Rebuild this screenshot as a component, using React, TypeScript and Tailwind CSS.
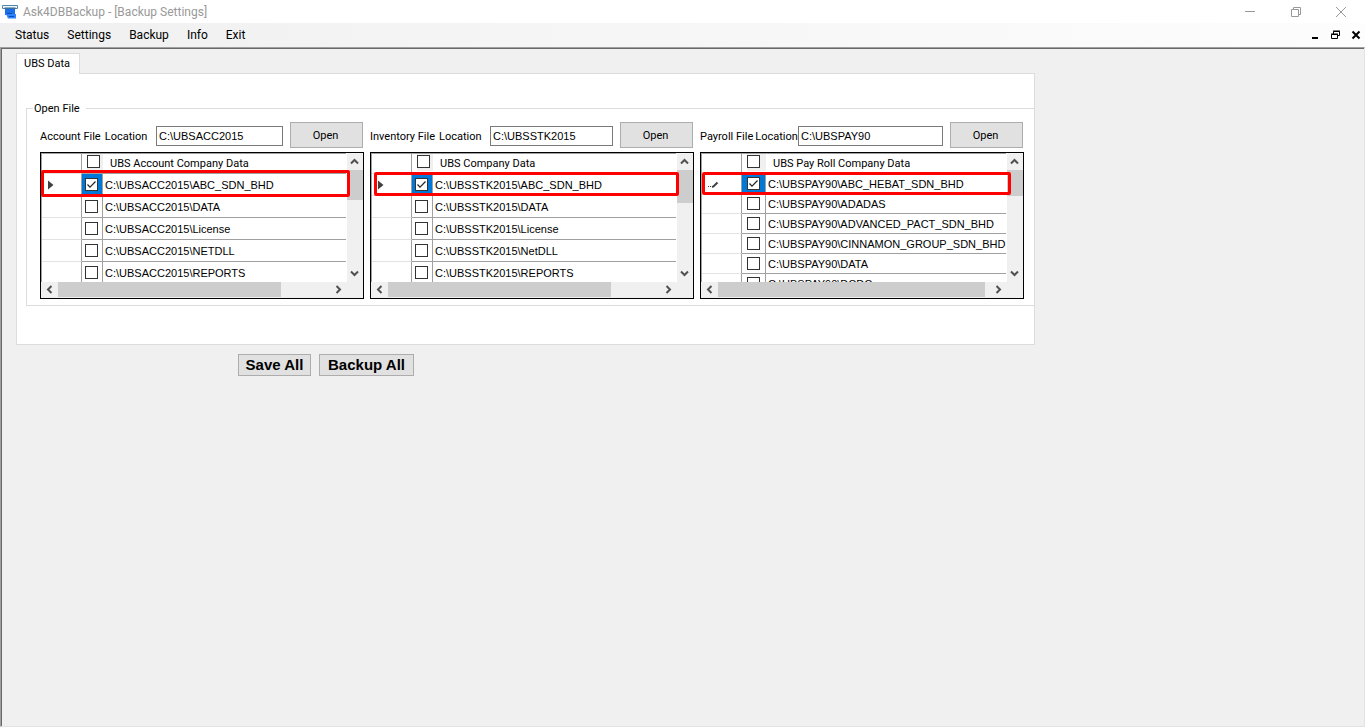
import React, { useState } from "react";

interface Company {
  name: string;
  checked: boolean;
}

interface PanelData {
  id: string;
  label: string;
  labelClass: string;
  path: string;
  heading: string;
  checkColClass: string;
  rowClass: string;
  marker: "arrow" | "pencil";
  highlightClass: string;
  vThumbClass: string;
  hThumbClass: string;
  companies: string[];
}

const panels: PanelData[] = [
  {
    id: "account",
    label: "Account File",
    labelClass: "w-[116px] gap-1",
    path: "C:\\UBSACC2015",
    heading: "UBS Account Company Data",
    checkColClass: "w-[21px]",
    rowClass: "h-[22px]",
    marker: "arrow",
    highlightClass: "left-0 right-[13px] top-[17px] h-[27px]",
    vThumbClass: "h-[30px]",
    hThumbClass: "w-[82%]",
    companies: ["ABC_SDN_BHD", "DATA", "License", "NETDLL", "REPORTS"],
  },
  {
    id: "inventory",
    label: "Inventory File",
    labelClass: "w-[120px] gap-1",
    path: "C:\\UBSSTK2015",
    heading: "UBS Company Data",
    checkColClass: "w-[21px]",
    rowClass: "h-[22px]",
    marker: "arrow",
    highlightClass: "left-[3px] right-[14px] top-[19px] h-[24px]",
    vThumbClass: "h-[33px]",
    hThumbClass: "w-[82%]",
    companies: ["ABC_SDN_BHD", "DATA", "License", "NetDLL", "REPORTS"],
  },
  {
    id: "payroll",
    label: "Payroll File",
    labelClass: "w-[98px] gap-0.5",
    path: "C:\\UBSPAY90",
    heading: "UBS Pay Roll Company Data",
    checkColClass: "w-[24px]",
    rowClass: "h-[20px]",
    marker: "pencil",
    highlightClass: "left-[1px] right-[12px] top-[19px] h-[23px]",
    vThumbClass: "h-[26px]",
    hThumbClass: "w-[98%]",
    companies: ["ABC_HEBAT_SDN_BHD", "ADADAS", "ADVANCED_PACT_SDN_BHD", "CINNAMON_GROUP_SDN_BHD", "DATA", "DCDC"],
  },
];

const AppIcon = () => (
  <svg width="18" height="16" viewBox="0 0 18 16" aria-hidden="true">
    <path d="M1.500 1.500h15v3h-15z" fill="#f2f7fb" stroke="#4f86ad" />
    <path d="M3.500 4h11" stroke="#2c5f8a" />
    <path d="M4 5h10v6H4z" fill="#1b6fe8" />
    <path d="M5 10h10v4.500H7z" fill="#2f83ff" />
    <path d="M6 9.500h5M8 12.500h5" stroke="#0a4db3" />
  </svg>
);

const Chevron = ({ d }: { d: string }) => (
  <svg width="9" height="9" viewBox="0 0 9 9" fill="none" stroke="#505050" strokeWidth="2" aria-hidden="true">
    <path d={d} />
  </svg>
);

const CheckBox = ({ label, checked, onChange }: { label: string; checked: boolean; onChange: () => void }) => (
  <span className="relative block size-[13px]">
    <input
      type="checkbox"
      aria-label={label}
      checked={checked}
      onChange={onChange}
      className="block size-[13px] appearance-none border border-[#333333] bg-white"
    />
    {checked && (
      <svg className="pointer-events-none absolute inset-0" width="13" height="13" viewBox="0 0 13 13" fill="none" stroke="#222222" aria-hidden="true">
        <path d="M2.500 6.500l2.500 2.700L10.500 3.500" strokeWidth="1.200" />
      </svg>
    )}
  </span>
);

const RowMarker = ({ marker }: { marker: "arrow" | "pencil" }) =>
  marker === "arrow" ? (
    <svg width="16" height="10" viewBox="0 0 16 10" aria-hidden="true">
      <path d="M5 0.500v9L10.500 5z" fill="#404040" />
    </svg>
  ) : (
    <svg width="16" height="10" viewBox="0 0 16 10" aria-hidden="true">
      <path d="M5 7h1v1H5zM7 7h1v1H7z" fill="#404040" />
      <path d="M9 8l1.500-0.500 4-4" fill="none" stroke="#404040" strokeWidth="2" />
    </svg>
  );

const CompanyGrid: React.FC<{ panel: PanelData }> = ({ panel }) => {
  const [companies, setCompanies] = useState<Company[]>(
    panel.companies.map((name, index) => ({ name, checked: index === 0 }))
  );
  const allChecked = companies.every((company) => company.checked);

  const toggle = (name: string) => {
    setCompanies((prev) => prev.map((c) => (c.name === name ? { ...c, checked: !c.checked } : c)));
  };

  const toggleAll = () => {
    setCompanies((prev) => prev.map((c) => ({ ...c, checked: !allChecked })));
  };

  return (
    <div className="relative border border-black bg-[#f0f0f0]">
      <div className="flex h-[129px] bg-white">
        <div className="mr-px min-w-0 flex-1 overflow-hidden border-l border-t border-[#a0a0a0]">
          <table className="w-full table-fixed border-separate border-spacing-0">
            <thead>
              <tr className="h-[20px]">
                <th className="w-[40px] border-b border-r border-b-[#e3e3e3] border-r-[#a0a0a0] p-0"></th>
                <th className={`${panel.checkColClass} border-b border-[#a0a0a0] p-0 pl-[5px] align-top`}>
                  <div className="bg-[#f0f0f0] pb-[3px] pt-px">
                    <CheckBox label={`Select all ${panel.heading}`} checked={allChecked} onChange={toggleAll} />
                  </div>
                </th>
                <th className="whitespace-nowrap border-b border-[#a0a0a0] pb-0 pl-[7px] pr-0 pt-px text-left font-['Roboto',sans-serif] font-normal">
                  {panel.heading}
                </th>
              </tr>
            </thead>
            <tbody>
              {companies.map((company, index) => (
                <tr key={company.name} className={panel.rowClass}>
                  <td className="border-b border-r border-b-[#e3e3e3] border-r-[#a0a0a0] p-0 pl-[1px]">
                    {index === 0 && <RowMarker marker={panel.marker} />}
                  </td>
                  <td className={`border-b border-r border-[#a0a0a0] p-0 ${index === 0 ? "bg-[#0078d7]" : ""}`}>
                    <div className="flex justify-center pr-px">
                      <CheckBox label={company.name} checked={company.checked} onChange={() => toggle(company.name)} />
                    </div>
                  </td>
                  <td className="whitespace-nowrap border-b border-[#a0a0a0] py-0 pl-[2px] pr-0">
                    {panel.path}\{company.name}
                  </td>
                </tr>
              ))}
            </tbody>
          </table>
        </div>
        <div className="flex w-[16px] flex-col bg-[#f0f0f0]">
          <button type="button" aria-label="Scroll up" className="flex h-[17px] items-center pl-[3px]">
            <Chevron d="M1 6.500l3.500-3.500L8 6.500" />
          </button>
          <div className="flex-1">
            <div className={`${panel.vThumbClass} bg-[#cdcdcd]`}></div>
          </div>
          <button type="button" aria-label="Scroll down" className="flex h-[17px] items-center pl-[3px]">
            <Chevron d="M1 2.500l3.500 3.500L8 2.500" />
          </button>
        </div>
      </div>
      <div className="flex h-[16px] pr-[16px]">
        <button type="button" aria-label="Scroll left" className="flex w-[17px] items-center pb-px pl-1">
          <Chevron d="M6.500 1L3 4.500 6.500 8" />
        </button>
        <div className="flex-1">
          <div className={`${panel.hThumbClass} h-[15px] bg-[#cdcdcd]`}></div>
        </div>
        <button type="button" aria-label="Scroll right" className="flex w-[17px] items-center pb-px pl-1">
          <Chevron d="M2.500 1L6 4.500 2.500 8" />
        </button>
      </div>
      <div className={`${panel.highlightClass} pointer-events-none absolute rounded-xs border-3 border-[#ff0000]`}></div>
    </div>
  );
};

const FilePanel: React.FC<{ panel: PanelData }> = ({ panel }) => {
  const [path, setPath] = useState(panel.path);

  return (
    <div className="min-w-0">
      <div className="mb-1 flex h-[26px] items-center">
        <label
          htmlFor={panel.id}
          className={`${panel.labelClass} flex shrink-0 whitespace-nowrap pt-1 font-['Roboto',sans-serif]`}
        >
          <span>{panel.label}</span>
          <span>Location</span>
        </label>
        <input
          id={panel.id}
          type="text"
          value={path}
          onChange={(e) => setPath(e.target.value)}
          className="mr-[7px] mt-px h-[20px] min-w-0 flex-1 border border-[#7a7a7a] bg-white px-[2px]"
        />
        <button
          type="button"
          className="mr-px h-[26px] w-[73px] border border-[#adadad] bg-[#e1e1e1] pr-0.5 pt-0.5 font-['Roboto',sans-serif]"
        >
          Open
        </button>
      </div>
      <CompanyGrid panel={panel} />
    </div>
  );
};

const TitleBar = () => (
  <header className="flex h-[23px] items-center bg-white pl-[1px] pr-[1px] font-['Roboto',sans-serif] text-xs text-[#999999]">
    <AppIcon />
    <h1 className="ml-1 flex-1">Ask4DBBackup - [Backup Settings]</h1>
    <div className="flex">
      <button type="button" aria-label="Minimize" className="flex h-[20px] w-[46px] items-center justify-center">
        <svg width="10" height="10" stroke="#999999" fill="none"><path d="M0 4.500h10" /></svg>
      </button>
      <button type="button" aria-label="Restore" className="flex h-[20px] w-[45px] items-center justify-center">
        <svg width="10" height="10" stroke="#999999" fill="none"><path d="M0.500 2.500h7v7h-7zM2.500 2.500v-2h7v7h-2" /></svg>
      </button>
      <button type="button" aria-label="Close" className="flex h-[20px] w-[46px] items-center justify-center">
        <svg width="10" height="10" stroke="#999999" fill="none"><path d="M0 0l10 10M10 0L0 10" /></svg>
      </button>
    </div>
  </header>
);

const MenuBar = () => (
  <nav className="flex h-[24px] items-center bg-linear-to-r from-[#f0f0f0] to-[#fdfdfd] pl-[15px] pr-1 font-['Roboto',sans-serif] text-xs">
    <div className="flex flex-1 gap-[18px]">
      {["Status", "Settings", "Backup", "Info", "Exit"].map((item) => (
        <button type="button" key={item}>
          {item}
        </button>
      ))}
    </div>
    <div className="flex gap-[10px]">
      <button type="button" aria-label="Minimize window">
        <svg width="10" height="10" fill="none" stroke="#000000" strokeWidth="2"><path d="M1 8h6" /></svg>
      </button>
      <button type="button" aria-label="Restore window">
        <svg width="10" height="10" fill="none" stroke="#000000"><path d="M0.500 4.500h6v4h-6zM0 4h7M2.500 4V1.500h6v4H7M2 1h7" /></svg>
      </button>
      <button type="button" aria-label="Close window">
        <svg width="10" height="10" fill="none" stroke="#000000" strokeWidth="2"><path d="M1.500 1.500l7 7M8.500 1.500l-7 7" /></svg>
      </button>
    </div>
  </nav>
);

const App: React.FC = () => {
  return (
    <div className="flex min-h-screen flex-col bg-[#f0f0f0] font-['Liberation_Sans',sans-serif] text-[11px] leading-4 text-black">
      <TitleBar />
      <MenuBar />
      <main className="flex flex-1 flex-col border border-b-[#e3e3e3] border-l-[#a0a0a0] border-r-[#e3e3e3] border-t-[#a0a0a0]">
        <div className="flex-1 border-l border-t border-[#696969] pl-[14px] pt-1">
          <div role="tablist" className="flex">
            <button
              type="button"
              role="tab"
              aria-selected="true"
              className="relative z-10 -mb-px h-[21px] border border-b-0 border-[#dcdcdc] bg-white pl-[7px] pr-[9px] font-['Roboto',sans-serif]"
            >
              UBS Data
            </button>
          </div>
          <section className="w-full max-w-[1019px] border border-[#dcdcdc] bg-white pb-[38px] pl-[9px] pt-[26px]">
            <fieldset className="border border-r-0 border-[#dcdcdc] pb-1.5 pl-[13px] pr-[10px]">
              <legend className="-ml-[7px] pl-[1px] pr-[6px] pt-px font-['Roboto',sans-serif]">Open File</legend>
              <div className="grid grid-cols-3 gap-1.5 pt-[5px]">
                {panels.map((panel) => (
                  <FilePanel key={panel.id} panel={panel} />
                ))}
              </div>
            </fieldset>
          </section>
          <div className="ml-[222px] mt-[9px] flex gap-2 text-[15px] font-bold">
            <button type="button" className="h-[22px] w-[73px] border border-[#adadad] bg-[#e1e1e1] leading-5">
              Save All
            </button>
            <button type="button" className="h-[22px] w-[95px] border border-[#adadad] bg-[#e1e1e1] leading-5">
              Backup All
            </button>
          </div>
        </div>
      </main>
    </div>
  );
};

export default App;
